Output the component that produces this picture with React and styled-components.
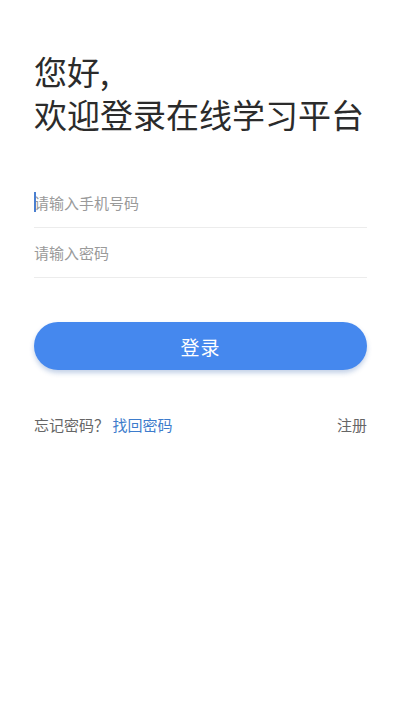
import React from "react";
import styled, { createGlobalStyle } from "styled-components";

const GlobalStyle = createGlobalStyle`
  html, body { margin: 0; padding: 0; background: #ffffff; }
  body { font-family: "Noto Sans CJK SC", "Noto Sans", sans-serif; }
  * { box-sizing: border-box; }
`;

const Page = styled.div`
  width: 400px;
  min-height: 710px;
  padding: 50px 33px 0 34px;
  display: flex;
  flex-direction: column;
  background: #fff;
`;

const Title = styled.h1`
  margin: 0;
  font-weight: 400;
  font-size: 33px;
  line-height: 43px;
  color: #2b2b2b;
`;

const TitleLine = styled.span`
  display: block;
`;

const Form = styled.div`
  margin-top: 42px;
  display: flex;
  flex-direction: column;
`;

const Field = styled.div`
  height: 50px;
  display: flex;
  align-items: center;
  border-bottom: 1px solid #ececec;
  position: relative;
`;

const Caret = styled.span`
  position: absolute;
  left: 0;
  top: 14px;
  width: 2px;
  height: 20px;
  background: #4a7fd0;
`;

const Placeholder = styled.span`
  font-size: 15px;
  color: #9a9a9a;
  line-height: 20px;
`;

const LoginButton = styled.button`
  margin-top: 44px;
  height: 48px;
  width: 100%;
  border: none;
  border-radius: 24px;
  background: #4588ee;
  color: #fff;
  font-family: inherit;
  font-size: 19px;
  letter-spacing: 1px;
  box-shadow: 0 3px 5px rgba(40, 90, 170, 0.28);
  display: flex;
  align-items: center;
  justify-content: center;
`;

const Links = styled.div`
  margin-top: 44px;
  display: flex;
  justify-content: space-between;
  align-items: center;
  font-size: 15px;
  line-height: 22px;
`;

const Muted = styled.span`
  color: #666;
`;

const Link = styled.span`
  color: #3d7ccc;
`;

export default function App() {
  return (
    <>
      <GlobalStyle />
      <Page>
        <Title>
          <TitleLine>您好,</TitleLine>
          <TitleLine>欢迎登录在线学习平台</TitleLine>
        </Title>
        <Form>
          <Field>
            <Caret />
            <Placeholder>请输入手机号码</Placeholder>
          </Field>
          <Field>
            <Placeholder>请输入密码</Placeholder>
          </Field>
        </Form>
        <LoginButton>登录</LoginButton>
        <Links>
          <span>
            <Muted>忘记密码？ </Muted>
            <Link>找回密码</Link>
          </span>
          <Muted>注册</Muted>
        </Links>
      </Page>
    </>
  );
}
